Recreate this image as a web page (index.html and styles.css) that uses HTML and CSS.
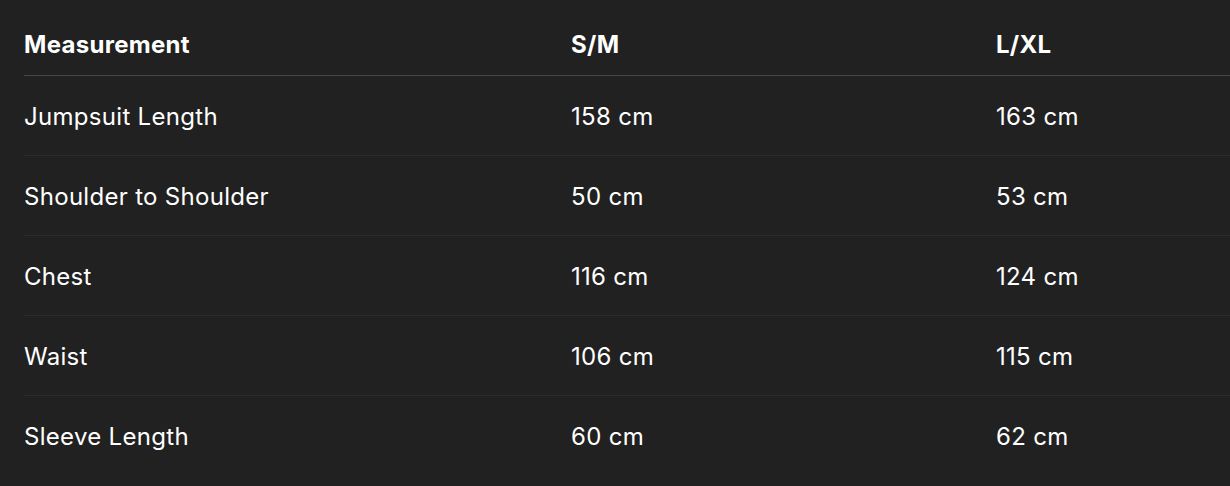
FILE: index.html
```html
<!doctype html>
<html lang="en">
<head>
	<meta charset="UTF-8">
	<meta name="viewport" content="width=device-width, initial-scale=1.0">
	<title>Size Chart</title>
	<link rel="stylesheet" href="styles.css">
</head>
<body>
	<div class="size_box">
		<table class="size_table">
			<thead>
				<tr>
					<th class="col_name">Measurement</th>
					<th class="col_sm">S/M</th>
					<th>L/XL</th>
				</tr>
			</thead>
			<tbody>
				<tr>
					<td>Jumpsuit Length</td>
					<td>158 cm</td>
					<td>163 cm</td>
				</tr>
				<tr>
					<td>Shoulder to Shoulder</td>
					<td>50 cm</td>
					<td>53 cm</td>
				</tr>
				<tr>
					<td>Chest</td>
					<td>116 cm</td>
					<td>124 cm</td>
				</tr>
				<tr>
					<td>Waist</td>
					<td>106 cm</td>
					<td>115 cm</td>
				</tr>
				<tr>
					<td>Sleeve Length</td>
					<td>60 cm</td>
					<td>62 cm</td>
				</tr>
			</tbody>
		</table>
	</div>
</body>
</html>
```

FILE: styles.css
```css
*,*::before,*::after{box-sizing:border-box;}
html,body{
	margin:0;padding:0;
	background:#212121;
}
body{
	font-family:Inter,"Noto Sans",sans-serif;
	font-size:24px;
	letter-spacing:0.3px;
	color:#fff;
}
.size_box{
	padding-left:24px;
	overflow:hidden;
}
.size_table{
	width:1250px;
	border-collapse:collapse;
	table-layout:fixed;
}
.size_table th,
.size_table td{
	text-align:left;
	padding:25px 0 23px;
	line-height:31px;
	border-bottom:1px solid #2c2c2c;
}
.size_table th{
	padding:29px 0 15px;
	font-weight:700;
	border-bottom-color:#464646;
}
.size_table tbody tr:last-child td{
	border-bottom:0;
}
.col_name{width:547px;}
.col_sm{width:425px;}
```
